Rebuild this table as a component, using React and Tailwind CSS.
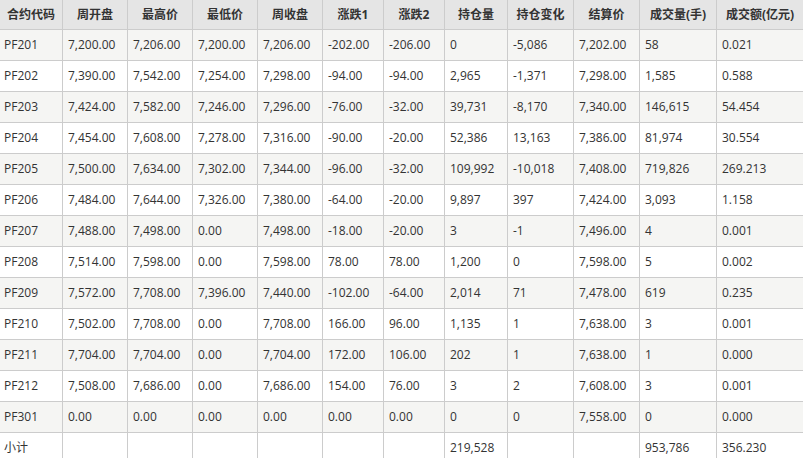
const headers = ['合约代码', '周开盘', '最高价', '最低价', '周收盘', '涨跌1', '涨跌2', '持仓量', '持仓变化', '结算价', '成交量(手)', '成交额(亿元)'];

const rows = [
  ['PF201', '7,200.00', '7,206.00', '7,200.00', '7,206.00', '-202.00', '-206.00', '0', '-5,086', '7,202.00', '58', '0.021'],
  ['PF202', '7,390.00', '7,542.00', '7,254.00', '7,298.00', '-94.00', '-94.00', '2,965', '-1,371', '7,298.00', '1,585', '0.588'],
  ['PF203', '7,424.00', '7,582.00', '7,246.00', '7,296.00', '-76.00', '-32.00', '39,731', '-8,170', '7,340.00', '146,615', '54.454'],
  ['PF204', '7,454.00', '7,608.00', '7,278.00', '7,316.00', '-90.00', '-20.00', '52,386', '13,163', '7,386.00', '81,974', '30.554'],
  ['PF205', '7,500.00', '7,634.00', '7,302.00', '7,344.00', '-96.00', '-32.00', '109,992', '-10,018', '7,408.00', '719,826', '269.213'],
  ['PF206', '7,484.00', '7,644.00', '7,326.00', '7,380.00', '-64.00', '-20.00', '9,897', '397', '7,424.00', '3,093', '1.158'],
  ['PF207', '7,488.00', '7,498.00', '0.00', '7,498.00', '-18.00', '-20.00', '3', '-1', '7,496.00', '4', '0.001'],
  ['PF208', '7,514.00', '7,598.00', '0.00', '7,598.00', '78.00', '78.00', '1,200', '0', '7,598.00', '5', '0.002'],
  ['PF209', '7,572.00', '7,708.00', '7,396.00', '7,440.00', '-102.00', '-64.00', '2,014', '71', '7,478.00', '619', '0.235'],
  ['PF210', '7,502.00', '7,708.00', '0.00', '7,708.00', '166.00', '96.00', '1,135', '1', '7,638.00', '3', '0.001'],
  ['PF211', '7,704.00', '7,704.00', '0.00', '7,704.00', '172.00', '106.00', '202', '1', '7,638.00', '1', '0.000'],
  ['PF212', '7,508.00', '7,686.00', '0.00', '7,686.00', '154.00', '76.00', '3', '2', '7,608.00', '3', '0.001'],
  ['PF301', '0.00', '0.00', '0.00', '0.00', '0.00', '0.00', '0', '0', '7,558.00', '0', '0.000'],
  ['小计', '', '', '', '', '', '', '219,528', '', '', '953,786', '356.230'],
];

const cols = 'grid-cols-[63px_65px_65px_65px_65px_61px_61px_63px_66px_66px_77px_86px]';

export default function App() {
  return (
    <div
      className="w-[803px] h-[458px] overflow-hidden bg-white text-[12px] text-[#333]"
      style={{ fontFamily: '"Open Sans", "Noto Sans CJK SC", sans-serif' }}
    >
      <div className={`grid ${cols} bg-[#e5e5e5]`}>
        {headers.map((h, i) => (
          <div
            key={h}
            className={`h-[30px] flex items-center justify-center font-bold border-b border-[#cccccc] ${i < 11 ? 'border-r' : ''}`}
          >
            {h}
          </div>
        ))}
      </div>
      {rows.map((r, ri) => (
        <div key={ri} className={`grid ${cols} ${ri % 2 === 0 && ri < 13 ? 'bg-[#f5f5f3]' : 'bg-white'}`}>
          {r.map((c, ci) => (
            <div
              key={ci}
              className={`h-[31px] flex items-center border-b border-[#cccccc] ${ci === 0 ? 'pl-[4px]' : 'pl-[5px]'} ${ci < 11 ? 'border-r' : ''}`}
            >
              {c}
            </div>
          ))}
        </div>
      ))}
    </div>
  );
}
